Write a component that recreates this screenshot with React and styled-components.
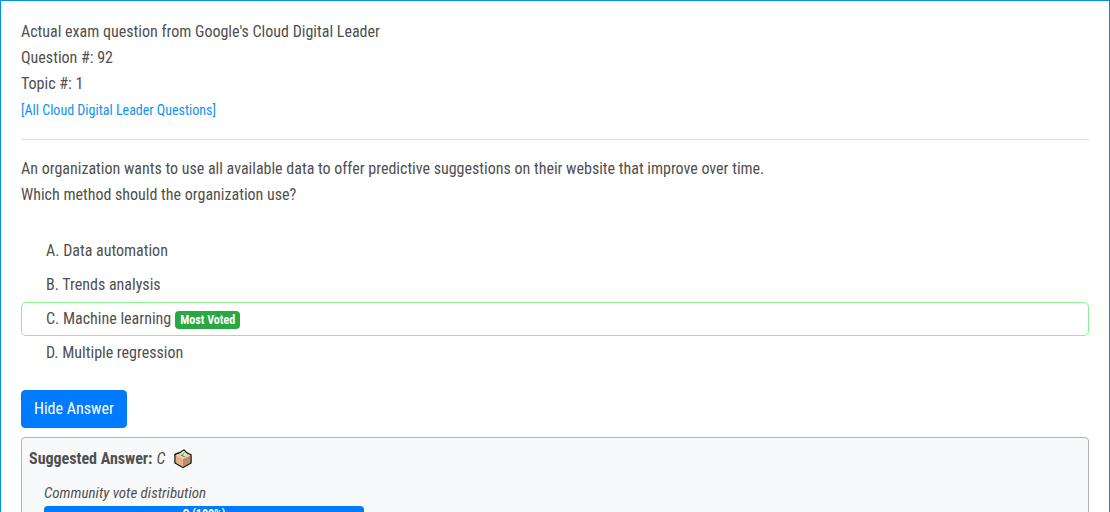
import React, { useState } from "react";
import styled, { createGlobalStyle } from "styled-components";

const Global = createGlobalStyle`
  *, *::before, *::after { box-sizing: border-box; }
  body {
    margin: 0;
    background: #fff;
    color: #505050;
    font-family: "Roboto Condensed", "Liberation Sans Narrow", Roboto, sans-serif;
    font-size: 16px;
    line-height: 26px;
  }
`;

const Card = styled.main`
  height: 100vh;
  overflow: hidden;
  padding: 18px 20px 0;
  border: 1px solid #0090e3;
  border-bottom: 0;
`;

const Header = styled.header`
  padding-bottom: 16px;
  border-bottom: 1px solid #dfdfdf;
`;

const AllLink = styled.a`
  display: block;
  width: fit-content;
  color: #1093ee;
  font-size: 14px;
  text-decoration: none;
`;

const Question = styled.p`
  margin: 16px 0 26px;
`;

const Choices = styled.ul`
  margin: 0 0 20px;
  padding: 0;
  list-style: none;
`;

const Choice = styled.li`
  display: flex;
  align-items: center;
  gap: 4px;
  height: 34px;
  padding: 0 24px;
  border: 1px solid ${(p) => (p.$voted ? "#90ee90" : "transparent")};
  border-radius: 5px;
`;

const Badge = styled.span`
  margin-top: 2px;
  padding: 3px 5px;
  border-radius: 4px;
  background: #28a745;
  color: #fff;
  font-size: 12px;
  font-weight: 700;
  line-height: 12px;
`;

const ToggleButton = styled.button`
  display: block;
  height: 38px;
  padding: 0 12px;
  border: 1px solid #007bff;
  border-radius: 4px;
  background: #007bff;
  color: #fff;
  font: inherit;
  cursor: pointer;
`;

const Answer = styled.section`
  margin-top: 9px;
  padding: 8px 7px 20px;
  border: 1px solid #b5b5b5;
  border-radius: 4px;
  background: #f8f9fa;
`;

const Suggested = styled.div`
  display: flex;
  align-items: center;
  gap: 4px;
`;

const BallotIcon = styled.svg`
  width: 20px;
  height: 20px;
  margin-left: 4px;
`;

const Votes = styled.figure`
  margin: 8px 15px 0;
`;

const VotesTitle = styled.figcaption`
  font-size: 15px;
  font-style: italic;
`;

const VoteBar = styled.div`
  max-width: 320px;
  height: 16px;
  border-radius: 4px;
  background: #007bff;
  color: #fff;
  font-size: 12px;
  font-weight: 700;
  line-height: 16px;
  text-align: center;
`;

const choices = [
  { letter: "A", text: "Data automation" },
  { letter: "B", text: "Trends analysis" },
  { letter: "C", text: "Machine learning", voted: true },
  { letter: "D", text: "Multiple regression" },
];

function Ballot() {
  return (
    <BallotIcon viewBox="0 0 20 20" aria-hidden="true">
      <path d="M2 5.5 7 3.5 11 1 13.5 3.5 18 6V14L10 18.5 2 14Z" fill="#e3b795" stroke="#111" strokeWidth="1.4" strokeLinejoin="round" />
      <path d="M2.7 6.5 10 10V17.7L2.7 13.6Z" fill="#dfb18e" />
      <path d="M10 10 17.3 6.5V13.6L10 17.7Z" fill="#bd8d6c" />
      <path d="M2.7 6 8 4 12 4 17.3 6.4 10 10Z" fill="#efcfb3" />
      <path d="M7.5 4 11 1.8 13 4.5 10.5 7Z" fill="#f0ffdf" />
      <path d="M8.5 4.5 10 5.5 11.5 3" fill="none" stroke="#78d63c" strokeWidth="1.4" />
      <path d="M8 6.2 11.8 7.8" stroke="#75604f" strokeWidth="1" />
    </BallotIcon>
  );
}

export default function App() {
  const [open, setOpen] = useState(true);
  return (
    <>
      <Global />
      <Card>
        <Header>
          <div>Actual exam question from Google's Cloud Digital Leader</div>
          <div>Question #: 92</div>
          <div>Topic #: 1</div>
          <AllLink href="#questions">[All Cloud Digital Leader Questions]</AllLink>
        </Header>
        <Question>
          An organization wants to use all available data to offer predictive suggestions on their website that improve over time.
          <br />
          Which method should the organization use?
        </Question>
        <Choices>
          {choices.map((c) => (
            <Choice key={c.letter} $voted={c.voted}>
              <span>{c.letter}. {c.text}</span>
              {c.voted && <Badge>Most Voted</Badge>}
            </Choice>
          ))}
        </Choices>
        <ToggleButton type="button" aria-expanded={open} onClick={() => setOpen(!open)}>
          {open ? "Hide Answer" : "Reveal Solution"}
        </ToggleButton>
        {open && (
          <Answer>
            <Suggested>
              <strong>Suggested Answer:</strong>
              <em>C</em>
              <Ballot />
            </Suggested>
            <Votes>
              <VotesTitle>Community vote distribution</VotesTitle>
              <VoteBar>C (100%)</VoteBar>
            </Votes>
          </Answer>
        )}
      </Card>
    </>
  );
}
